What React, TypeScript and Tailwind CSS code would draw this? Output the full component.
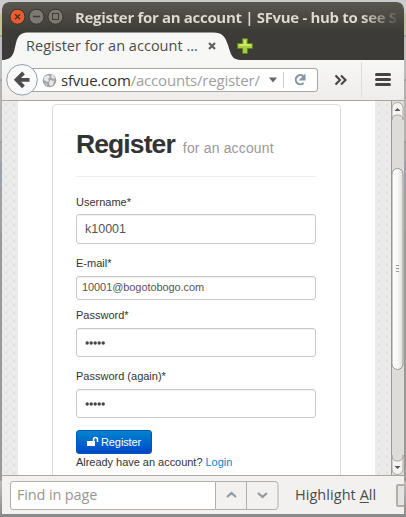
import type { ReactNode } from 'react';

const sans = "font-['Liberation_Sans',Arial,sans-serif]";
const ui = "font-['Open_Sans','Noto_Sans',sans-serif]";

function TitleBar() {
  return (
    <div className="flex h-[30px] items-center rounded-t-[7px] bg-linear-to-b from-[#59574f] to-[#3d3b36] pl-[7px]">
      <svg width="56" height="18" className="shrink-0" fill="none">
        <circle cx="8.5" cy="8.7" r="7.5" fill="#e95c30" stroke="#35332e" />
        <path d="M6 6.2l5 5m0-5l-5 5" stroke="#4b3029" strokeWidth="1.4" />
        <circle cx="27.5" cy="8.7" r="7.5" fill="#7b7971" stroke="#35332e" />
        <path d="M24 8.5h7" stroke="#3d3b36" strokeWidth="1.3" />
        <circle cx="46.5" cy="8.7" r="7.5" fill="#7b7971" stroke="#35332e" />
        <rect x="43.5" y="5.5" width="6" height="6" stroke="#3d3b36" />
      </svg>
      <div className={`ml-[10px] w-[326px] whitespace-nowrap bg-linear-to-r from-[#dfdbd2] from-88% to-[#dfdbd200] to-100% bg-clip-text text-[15px] leading-[22px] font-bold tracking-[-0.32px] text-transparent ${ui}`}>
        Register for an account | SFvue - hub to see S
      </div>
    </div>
  );
}

function TabStrip() {
  return (
    <div className="relative h-7 bg-[#3c3b37]">
      <svg width="260" height="28" className="absolute left-0 top-0">
        <path d="M0 28C12 28 12 19 14 11C16 3 19 .5 27 .5H211C220 .5 223 4 226 13C229 23 230 27.5 238 28Z" fill="#f7f7f6" />
        <path d="M207 11l6 6m0-6l-6 6" stroke="#62615e" strokeWidth="2.2" />
        <path d="M240.5 6.5h5v5h5v5h-5v5h-5v-5h-5v-5h5z" fill="#a7cc3c" stroke="#568222" />
        <path d="M243 8v5M237 13h12" stroke="#d9ec77" strokeWidth="1.5" />
      </svg>
      <div className={`relative pl-6 text-[14.5px] leading-[28px] tracking-[0.02px] text-[#4c4c4c] ${ui}`}>Register for an account …</div>
    </div>
  );
}

function Toolbar() {
  return (
    <div className="flex h-[41px] items-center border-b border-[#aaa6a0] bg-linear-to-b from-[#f7f7f6] to-[#efedeb] pl-1">
      <svg width="32" height="34" className="z-10 shrink-0" fill="none">
        <circle cx="16" cy="16.8" r="15.3" fill="#f9f9f9" stroke="#929dab" />
        <path d="M23.5 16.8H12M17.5 9.8l-7 7 7 7" stroke="#4d4d4d" strokeWidth="3.8" />
      </svg>
      <div className="-ml-2 flex h-6 w-[288px] shrink-0 items-center rounded-r-[3px] border border-[#aaa7a3] bg-white pl-[11px]">
        <svg width="15" height="15" viewBox="0 0 15 15" className="shrink-0">
          <circle cx="7.5" cy="7.5" r="6.8" fill="#a5a5a5" />
          <path d="M2 4l4-2 2 2-2 2 1 2-2 1-3-2zM10 1l3 4-2 1-2-2zM8 7l4 1-1 4-3 1-1-3zM3 10l2 1v2z" fill="#e8e8e8" />
        </svg>
        <span className={`ml-1 w-[204px] shrink-0 whitespace-nowrap text-[15px] leading-5 tracking-[-0.19px] text-[#a0a0a0] ${ui}`}>
          <span className="text-[#333]">sfvue.com</span>/accounts/register/
        </span>
        <svg width="56" height="22" className="shrink-0" fill="none">
          <path d="M4 8.5h8l-4 5z" fill="#666" />
          <path d="M18.5 3v16" stroke="#ccc" />
          <path d="M38.5 7.3A4.6 4.6 0 1 0 38.6 14" stroke="#8796a5" strokeWidth="2.1" />
          <path d="M40.5 4.5v7h-7z" fill="#8796a5" />
        </svg>
      </div>
      <svg width="86" height="40" className="shrink-0" fill="none">
        <path d="M17.5 15.5l4.5 4.5-4.5 4.5m5.5-9l4.5 4.5-4.5 4.5" stroke="#444" strokeWidth="2.1" />
        <path d="M43.5 2v36" stroke="#deddda" />
        <path d="M58.5 14.5h13M58.5 19.5h13M58.5 24.5h13" stroke="#444" strokeWidth="3" strokeLinecap="round" />
      </svg>
    </div>
  );
}

function Texture() {
  return (
    <svg width="16" height="374" className="shrink-0">
      <defs>
        <pattern id="weave" width="8" height="8" patternUnits="userSpaceOnUse">
          <rect width="8" height="8" fill="#ececec" />
          <path d="M0 0l8 8M8 0L0 8" stroke="#e3e3e3" strokeWidth=".8" />
          <circle cx="4" cy="4" r="1.3" fill="#e0e0e0" />
        </pattern>
      </defs>
      <rect width="16" height="374" fill="url(#weave)" />
    </svg>
  );
}

function Field({ label, children, className }: { label: string; children: ReactNode; className: string }) {
  return (
    <div>
      <div className="h-[18px] text-[11px] leading-[18px] text-[#333]">{label}</div>
      <div className={`flex items-center rounded-[3px] border border-[#c9c9c9] bg-white text-[#555] shadow-[inset_0_1px_1px_#00000010] ${className}`}>{children}</div>
    </div>
  );
}

function Dots() {
  return (
    <svg width="24" height="8" fill="#444">
      <circle cx="2.2" cy="4" r="1.7" />
      <circle cx="6.2" cy="4" r="1.7" />
      <circle cx="10.2" cy="4" r="1.7" />
      <circle cx="14.2" cy="4" r="1.7" />
      <circle cx="18.2" cy="4" r="1.7" />
    </svg>
  );
}

function Page() {
  return (
    <div className={`flex h-[374px] overflow-hidden bg-white ${sans}`}>
      <Texture />
      <div className="flex h-full w-[357px] shrink-0 pl-[34px] pt-[3px]">
        <div className="h-[390px] w-[289px] shrink-0 rounded-[4px] border border-[#dedede] pl-[23px] pr-6">
          <div className="flex h-[72px] items-baseline border-b border-[#eee] pt-5 leading-[38px] whitespace-nowrap">
            <h1 className="text-[26.5px] font-bold tracking-[-0.9px] text-[#333]">Register</h1>
            <span className="ml-2 text-[14px] tracking-[0.16px] text-[#999]">for an account</span>
          </div>
          <div className="pt-4">
            <Field label="Username*" className="mt-[3px] h-[30px] pl-2 text-[12.5px]">k10001</Field>
            <div className="h-[10px]" />
            <Field label="E-mail*" className="mt-[4px] h-6 pl-[5px] pb-px text-[11px] tracking-[-0.08px]">10001@bogotobogo.com</Field>
            <div className="h-[6px]" />
            <Field label="Password*" className="mt-[4px] h-[29px] pl-2"><Dots /></Field>
            <div className="h-[10px]" />
            <Field label="Password (again)*" className="mt-[4px] h-[29px] pl-2"><Dots /></Field>
          </div>
          <button className="mt-3 flex h-6 w-[76px] items-center rounded-[3px] border border-[#0057b8] bg-linear-to-b from-[#0683cd] to-[#0545c8] pl-[10px] text-[11px] tracking-[-0.1px] text-white">
            <svg width="12" height="12" className="mr-[2px] shrink-0" fill="none">
              <rect y="5" width="8" height="5" fill="#fff" />
              <path d="M6.5 6V3.5a2 2 0 0 1 4 0V6" stroke="#fff" strokeWidth="1.5" />
            </svg>
            Register
          </button>
          <p className="text-[11px] leading-[17px] whitespace-nowrap tracking-[-0.03px] text-[#333]">Already have an account? <a className="text-[#0088cc]">Login</a></p>
        </div>
      </div>
      <Texture />
      <svg width="13" height="374" className="shrink-0">
        <defs>
          <linearGradient id="thumb"><stop stopColor="#fff" /><stop offset=".5" stopColor="#f8f8f6" /><stop offset="1" stopColor="#deddda" /></linearGradient>
        </defs>
        <rect width="13" height="374" fill="#dddcd9" />
        <path d="M.5 0v374" stroke="#9b9995" />
        <path d="M1 19V7a5.5 5.5 0 0 1 11 0v12q0-5-5.5-5T1 19z" fill="#f5f4f2" stroke="#aaa7a1" />
        <path d="M3.5 10h6l-3-3z" fill="#555" />
        <rect x="1" y="67.5" width="11" height="201" rx="5.5" fill="url(#thumb)" stroke="#999792" />
        <path d="M5 164.5h3M5 167.5h3M5 170.5h3" stroke="#999" />
        <path d="M1 354v14a5.5 5.5 0 0 0 11 0v-14q0 6-5.5 6T1 354z" fill="#f5f4f2" stroke="#aaa7a1" />
        <path d="M3.5 370h6l-3 3z" transform="translate(0 -5)" fill="#555" />
      </svg>
    </div>
  );
}

function FindBar() {
  return (
    <div className={`flex h-[39px] items-center overflow-hidden border-t border-[#aaa6a0] bg-[#f2f1f0] pl-2 ${ui}`}>
      <div className="flex h-[29px] w-[206px] shrink-0 items-center rounded-l-[3px] border border-[#b2afab] bg-white pl-[6px] text-[14.5px] tracking-[-0.15px] text-[#9a9791]">Find in page</div>
      <svg width="63" height="29" className="shrink-0" fill="none">
        <path d="M0 .5h59q3 0 3 3v22q0 3-3 3H0M30.5 0v29" stroke="#b2afab" />
        <path d="M11 16l4.5-4 4.5 4M42 12l4.5 4 4.5-4" stroke="#929aa1" strokeWidth="2.3" />
      </svg>
      <div className="ml-4 w-[81px] shrink-0 whitespace-nowrap text-[14.5px] leading-[20px] tracking-[0.05px] text-[#4c4c4c]">Highlight <span className="underline underline-offset-2">A</span>ll</div>
      <div className="ml-5 h-[23px] w-4 shrink-0 rounded-l-[2px] border-2 border-[#b2afab] bg-[#e4e3e1]" />
    </div>
  );
}

export default function App() {
  return (
    <div className="h-[517px] w-[406px] overflow-hidden bg-[linear-gradient(#cbcbcd_0_13px,#c3c39a_14px_35px,#88886c_36px,#bcbcbe_37px_79px,#8c8c8c_80px,#b2b2b2_81px_141px,#8c8c8c_142px,#a8a8a8_143px_161px,#9ca1ad_162px_188px,#a0a0a0_189px_230px,#999_232px_480px,#bbb_482px,#888_517px)] px-[2px] pt-[2px]">
      <div className="w-[402px] overflow-hidden rounded-t-[7px]">
        <TitleBar />
        <TabStrip />
        <Toolbar />
        <Page />
        <FindBar />
      </div>
    </div>
  );
}
